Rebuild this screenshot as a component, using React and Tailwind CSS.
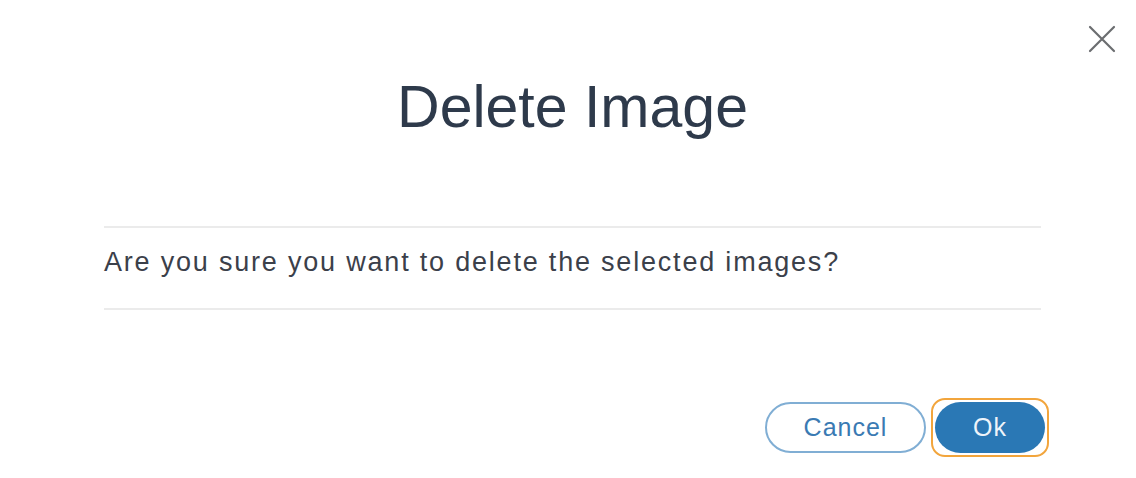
import { useState } from 'react';

const FONT = "font-['Liberation_Sans','Helvetica_Neue',Arial,sans-serif]";

function CloseIcon() {
  return (
    <svg width="28" height="28" viewBox="0 0 28 28" fill="none">
      <path d="M2 2 L26 26 M26 2 L2 26" stroke="#6b6d70" strokeWidth="2.2" strokeLinecap="round" />
    </svg>
  );
}

export default function App() {
  const [open, setOpen] = useState(true);

  return (
    <div className={`relative h-[478px] w-full bg-white ${FONT}`}>
      {/* ── Close ── */}
      <button
        type="button"
        onClick={() => setOpen(false)}
        className="absolute right-[20px] top-[25px] p-0"
        aria-label="Close"
      >
        <CloseIcon />
      </button>

      {/* ── Title ── */}
      <h2 className="pt-[78px] pl-[9px] text-center text-[59px] leading-[58px] font-normal text-[#2e3a4b]">
        Delete Image
      </h2>

      {/* ── Body ── */}
      <div className="mt-[90px] ml-[104px] mr-[95px] border-y-2 border-[#ebebeb] pt-[19px] pb-[31px]">
        <p className="text-[27px] leading-[30px] tracking-[1.8px] text-[#3b404a]">
          Are you sure you want to delete the selected images?
        </p>
      </div>

      {/* ── Actions ── */}
      <div className="mt-[88px] flex items-center justify-end gap-[5px] pr-[87px]">
        <button
          type="button"
          className="h-[51px] w-[161px] rounded-full border-2 border-[#80aed4] bg-white text-[25px] tracking-[1px] text-[#3a7ab3]"
        >
          Cancel
        </button>
        <div className="rounded-[14px] border-2 border-[#f2a53c] p-[2px]">
          <button
            type="button"
            onClick={() => setOpen(!open)}
            className="block h-[51px] w-[110px] rounded-full bg-[#2a78b5] text-[25px] tracking-[1px] text-[#eef4fa]"
          >
            Ok
          </button>
        </div>
      </div>
    </div>
  );
}
